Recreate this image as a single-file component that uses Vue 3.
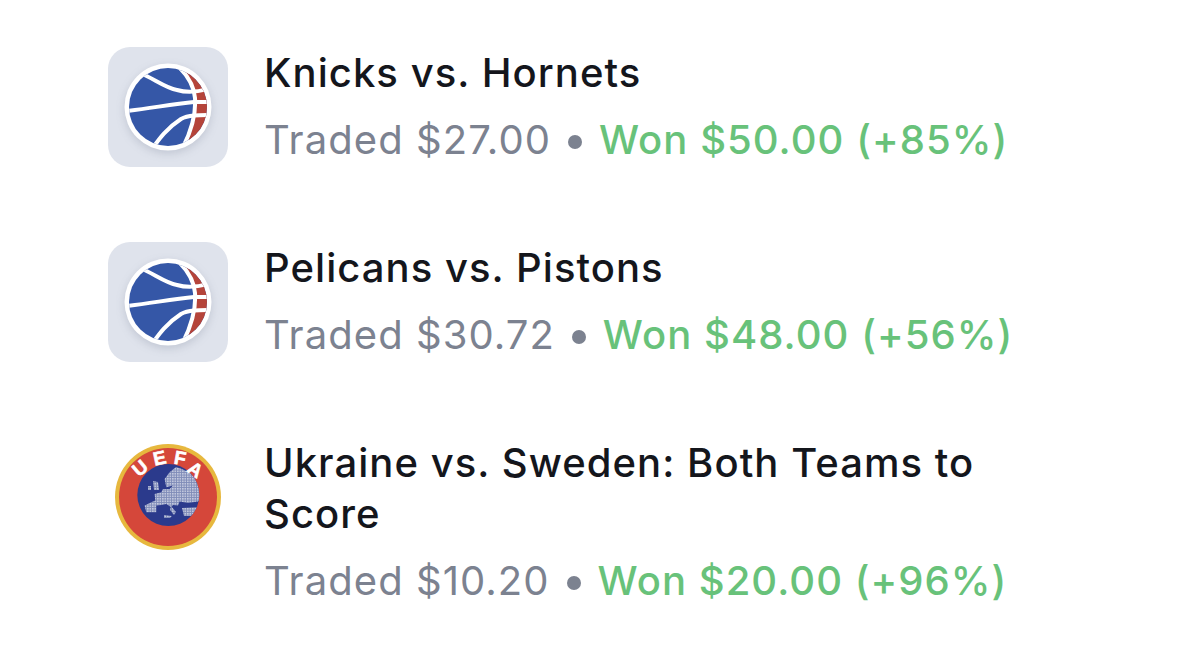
<script setup>
const rows = [
  { id: 1, title: 'Knicks vs. Hornets', traded: 'Traded $27.00', won: 'Won $50.00 (+85%)', icon: 'ball' },
  { id: 2, title: 'Pelicans vs. Pistons', traded: 'Traded $30.72', won: 'Won $48.00 (+56%)', icon: 'ball' },
  { id: 3, title: 'Ukraine vs. Sweden: Both Teams to Score', traded: 'Traded $10.20', won: 'Won $20.00 (+96%)', icon: 'uefa' },
]
</script>

<template>
  <div class="page">
    <div v-for="r in rows" :key="r.id" class="row">
      <div class="icon" :class="r.icon">
        <svg v-if="r.icon === 'ball'" class="ball-svg" width="90" height="90" viewBox="0 0 90 90">
          <circle cx="45" cy="45" r="43.5" fill="#fff" />
          <clipPath id="cb"><circle cx="45" cy="45" r="39" /></clipPath>
          <g clip-path="url(#cb)">
            <rect width="90" height="90" fill="#3557a7" />
            <path d="M56 0L90 0L90 90L59 90Q68 76 70 62Q74 44 71 30Q66 14 56 0Z" fill="#b5443a" />
            <g fill="none" stroke="#fff" stroke-width="4">
              <path d="M56 5C65 14 71 24 72 36C73 50 70 66 59 87" />
              <path d="M3 49C25 47 48 42 71 40L90 40" />
              <path d="M17 11C30 16 42 26 54 28C64 31 76 30 88 26" />
              <path d="M29 87C36 77 44 66 58 57C65 53 76 53 88 53" />
            </g>
          </g>
        </svg>
        <svg v-else width="108" height="108" viewBox="0 0 108 108">
          <defs>
            <pattern id="dots" width="2.5" height="2.5" patternUnits="userSpaceOnUse">
              <rect width="2.5" height="2.5" fill="#7f8bb8" />
              <rect width="1.6" height="1.6" fill="#c5cbdf" />
            </pattern>
            <clipPath id="globe"><circle cx="54.3" cy="52" r="31" /></clipPath>
          </defs>
          <circle cx="54" cy="54" r="53" fill="#e7b83e" />
          <circle cx="54" cy="54" r="49" fill="#d5473a" />
          <circle cx="54.3" cy="52" r="31" fill="#2b3a8c" />
          <g clip-path="url(#globe)">
            <g transform="translate(-2 0)" fill="url(#dots)">
              <path d="M64 24L70 26L78 30L86 37L92 53L86 58.6L76 60L67.6 58.6L66 62.6L61 62L59.3 64.3L54.3 61L49.3 62L44.3 62.6L44.3 69.3L34.3 69.3L32.6 62.6L39.3 59.3L43.3 57.6L42.6 51L49.3 49.3L51 46L57.6 46L61 42.6L54.3 44.3L52.6 36L57.6 29.3Z" />
              <path d="M41 38L46 39L47 47L42 47Z M36 43L39 43L39 47L36 47Z" />
              <path d="M59 63L64 69L62 72L58 67Z M70 65L90 64L90 73L72 73Z M52 72L60 73L58 75L52 75Z" />
            </g>
          </g>
          <text x="26" y="25" class="u" transform="rotate(-40 26 25)">U</text>
          <text x="45.6" y="15" class="u" transform="rotate(-12 45.6 15)">E</text>
          <text x="66" y="15" class="u" transform="rotate(10 66 15)">F</text>
          <text x="81.3" y="26.5" class="u" transform="rotate(35 81.3 26.5)">A</text>
        </svg>
      </div>
      <div class="body">
        <div class="title">{{ r.title }}</div>
        <div class="meta">
          <span class="traded">{{ r.traded }}</span>
          <span class="dot"></span>
          <span class="won">{{ r.won }}</span>
        </div>
      </div>
    </div>
  </div>
</template>

<style>
html, body { background: #fff; }
</style>
<style scoped>
.page {
  width: 1196px;
  height: 669px;
  box-sizing: border-box;
  padding: 47px 0 0 108px;
  display: flex;
  flex-direction: column;
  gap: 75px;
  background: #fff;
  font-family: Inter, "Noto Sans", sans-serif;
  overflow: hidden;
}
.row { display: flex; gap: 36px; align-items: flex-start; }
.icon {
  width: 120px;
  height: 120px;
  flex: none;
  display: flex;
  align-items: center;
  justify-content: center;
}
.icon.ball { background: #dfe3ec; border-radius: 22px; }
.ball-svg { filter: drop-shadow(0 3px 4px rgba(60, 70, 100, 0.18)); }
.body { width: 760px; }
.title {
  font-size: 40px;
  line-height: 51px;
  color: #14161c;
  font-weight: 450;
  letter-spacing: 1.05px;
}
.meta {
  margin-top: 17px;
  display: flex;
  align-items: center;
  font-size: 40px;
  line-height: 50px;
  letter-spacing: 1.05px;
  white-space: nowrap;
}
.traded { color: #7c8290; }
.won { color: #68c27a; font-weight: 450; }
.dot {
  flex: none;
  width: 14px;
  height: 14px;
  border-radius: 50%;
  background: #7c8290;
  margin: 4px 17px 0;
}
.u {
  font: 700 19px "Liberation Sans", sans-serif;
  fill: #fff;
  stroke: #fff;
  stroke-width: 0.6px;
  text-anchor: middle;
  dominant-baseline: central;
}
</style>
